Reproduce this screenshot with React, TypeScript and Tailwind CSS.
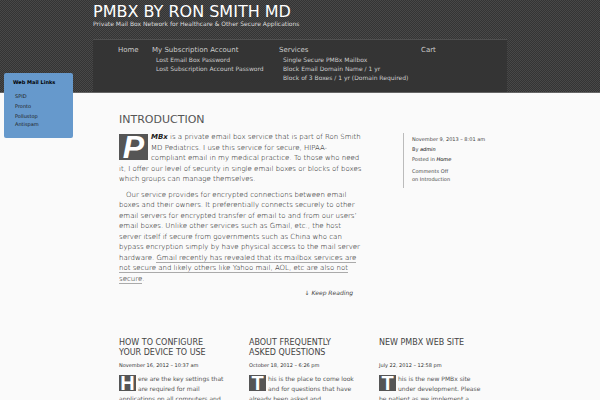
const menu = [
  { title: "Home", width: "w-[34px]", items: [] },
  {
    title: "My Subscription Account",
    width: "w-[127px]",
    items: ["Lost Email Box Password", "Lost Subscription Account Password"],
  },
  {
    title: "Services",
    width: "w-[142px]",
    items: [
      "Single Secure PMBx Mailbox",
      "Block Email Domain Name / 1 yr",
      "Block of 3 Boxes / 1 yr (Domain Required)",
    ],
  },
  { title: "Cart", width: "w-[34px]", items: [] },
];

const mailLinks = ["SPID", "Pronto", "Pollustop Antispam"];

const posts = [
  {
    title: "How to Configure your device to use",
    date: "November 16, 2012 – 10:37 am",
    cap: "H",
    text: "ere are the key settings that are required for mail applications on all computers and",
  },
  {
    title: "About Frequently Asked Questions",
    date: "October 18, 2012 – 6:26 pm",
    cap: "T",
    text: "his is the place to come look and for questions that have already been asked and",
  },
  {
    title: "New PMBx Web Site",
    date: "July 22, 2012 – 12:58 pm",
    cap: "T",
    text: "his is the new PMBx site under development. Please be patient as we implement a",
  },
];

function Header() {
  return (
    <header className="border-b border-[#666] bg-[#3d3d3d] bg-[repeating-conic-gradient(#343434_0_25%,#484848_0_50%)] bg-[length:2px_2px]">
      <div className="mx-auto w-[69%]">
        <div className="h-[39px] pt-[3px]">
          <h1 className="text-[16px] leading-[18px] text-white uppercase">
            <a href="#">PMBx by Ron Smith MD</a>
          </h1>
          <p className="text-[6px] leading-[6px] text-[#ddd]">
            Private Mail Box Network for Healthcare &amp; Other Secure Applications
          </p>
        </div>

        <nav className="h-[53px] border-t border-[#505050] bg-[#343434] px-[25px] pt-[5px] text-[#ccc]">
          <ul className="flex">
            {menu.map((entry) => (
              <li key={entry.title} className={`${entry.width} shrink-0 whitespace-nowrap`}>
                <a href="#" className="block text-[7px] leading-[10px]">
                  {entry.title}
                </a>
                <ul className="pl-1 text-[6px] leading-[9px]">
                  {entry.items.map((item) => (
                    <li key={item}>
                      <a href="#">{item}</a>
                    </li>
                  ))}
                </ul>
              </li>
            ))}
          </ul>
        </nav>
      </div>
    </header>
  );
}

function MailLinks() {
  return (
    <aside className="fixed top-[73px] left-1 h-[65px] w-[69px] rounded-[2px] bg-[#6699cc] px-[9px] pt-[5px] text-[#222]">
      <h2 className="text-[5px] leading-[9px] font-bold whitespace-nowrap text-black">Web Mail Links</h2>
      <ul className="mt-[5px] flex w-9 flex-col gap-0.5 pl-0.5 text-[5px] leading-[8px]">
        {mailLinks.map((link) => (
          <li key={link}>
            <a href="#">{link}</a>
          </li>
        ))}
      </ul>
    </aside>
  );
}

function Introduction() {
  return (
    <section className="flex">
      <article className="w-[246px] shrink-0">
        <h2 className="text-[11px] leading-[14px] text-[#555] uppercase">Introduction</h2>
        <div className="mt-[5px] text-[7px] leading-normal font-extralight text-black">
          <p>
            <span className="float-left mt-[2px] mr-[3px] flex h-[26px] w-[29px] items-center justify-center bg-[#555] font-['Liberation_Sans'] text-[32px] leading-[26px] font-bold text-white italic">
              P
            </span>
            <strong className="font-bold text-[#222] italic">MBx</strong> is a private email box service that is part
            of Ron Smith MD Pediatrics. I use this service for secure, HIPAA-
            <br />
            compliant email in my medical practice. To those who need it, I offer our level of security in single email
            boxes or blocks of boxes which groups can manage themselves.
          </p>
          <p className="mt-[5px] indent-[7px]">
            Our service provides for encrypted connections between email boxes and their owners. It preferentially
            connects securely to other email servers for encrypted transfer of email to and from our users’ email
            boxes. Unlike other services such as Gmail, etc., the host server itself if secure from governments such as
            China who can bypass encryption simply by have physical access to the mail server hardware.{" "}
            <a href="#" className="border-b border-[#aaa] text-black">
              Gmail recently has revealed that its mailbox services are not secure and likely others like Yahoo mail,
              AOL, etc are also not secure
            </a>
            .
          </p>
        </div>
        <p className="mt-[5px] pr-3 text-right text-[6px] leading-[8px] text-[#444] italic">
          <a href="#">↓ Keep Reading</a>
        </p>
      </article>

      <div className="mt-5 ml-[38px] h-[55px] shrink-0 border-l border-[#bbb] pt-[2px] pl-2 text-[5px] leading-[8px] whitespace-nowrap text-[#444]">
        <p>November 9, 2013 – 8:01 am</p>
        <p className="mt-0.5">
          By <em className="text-black">admin</em>
        </p>
        <p className="mt-0.5">
          Posted in <em className="text-black">Home</em>
        </p>
        <p className="mt-1">
          Comments Off
          <br />
          on Introduction
        </p>
      </div>
    </section>
  );
}

export default function App() {
  return (
    <div className="h-screen overflow-hidden bg-[#fafafa] font-['DejaVu_Sans',sans-serif]">
      <Header />
      <MailLinks />
      <main className="mx-auto w-[69%] px-[26px] pt-5">
        <Introduction />
        <section className="mt-[41px] grid grid-cols-[108px_108px_108px] gap-x-[22px]">
          {posts.map((post) => (
            <article key={post.title}>
              <h2 className="h-5 text-[8px] leading-[10px] text-[#444] uppercase">{post.title}</h2>
              <p className="mt-1 text-[5px] leading-[7px] text-[#333]">{post.date}</p>
              <p className="mt-[5px] text-[6px] leading-[10px] text-[#555]">
                <span className="float-left mt-px mr-[2px] flex h-4 w-[17px] items-center justify-center bg-[#555] font-['Liberation_Sans'] text-[20px] leading-4 font-bold text-white">
                  {post.cap}
                </span>
                {post.text}
              </p>
            </article>
          ))}
        </section>
      </main>
    </div>
  );
}
